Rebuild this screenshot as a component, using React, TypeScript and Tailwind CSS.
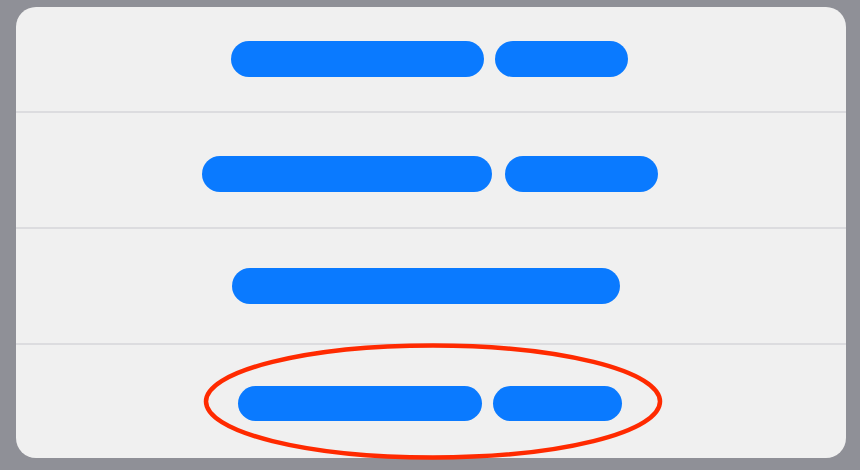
import React from "react";

function Pill({ w, h = 36 }: { w: string; h?: number }) {
  return <div className={`${w} ${h === 35 ? "h-[35px]" : "h-[36px]"} rounded-full bg-[#0a7aff] shrink-0`} />;
}

export default function App() {
  return (
    <div className="relative w-[860px] h-[470px] bg-[#8f9097] pt-[7px] pl-[16px] overflow-hidden">
      <div className="w-[830px] h-[451px] rounded-[20px] bg-[#f0f0f0] overflow-hidden flex flex-col">
        <div className="h-[104px] flex items-start pt-[34px] pl-[215px] gap-[11px]">
          <Pill w="w-[253px]" />
          <Pill w="w-[133px]" />
        </div>
        <div className="h-[2px] bg-[#dcdcdf]" />
        <div className="h-[114px] flex items-start pt-[43px] pl-[186px] gap-[13px]">
          <Pill w="w-[290px]" />
          <Pill w="w-[153px]" />
        </div>
        <div className="h-[2px] bg-[#dcdcdf]" />
        <div className="h-[114px] flex items-start pt-[39px] pl-[216px]">
          <Pill w="w-[388px]" />
        </div>
        <div className="h-[2px] bg-[#dcdcdf]" />
        <div className="flex-1 flex items-start pt-[41px] pl-[222px] gap-[11px]">
          <Pill w="w-[244px]" h={35} />
          <Pill w="w-[129px]" h={35} />
        </div>
      </div>
      <svg
        className="absolute left-[202px] top-[342px]"
        width="462"
        height="120"
        viewBox="0 0 462 120"
      >
        <ellipse cx="231" cy="59.5" rx="227" ry="56" fill="none" stroke="#ff2a00" strokeWidth="4.5" />
      </svg>
    </div>
  );
}
